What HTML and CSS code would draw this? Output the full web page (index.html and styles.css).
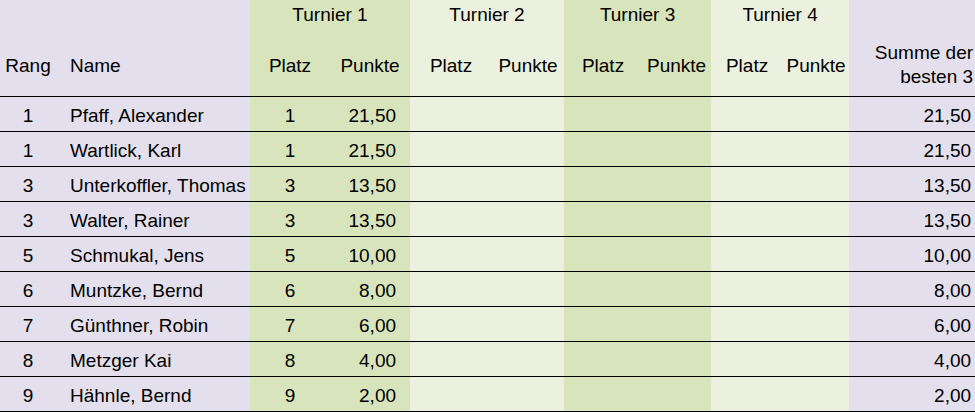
FILE: index.html
```html
<!DOCTYPE html>
<html lang="de">
<head>
<meta charset="utf-8">
<title>Rangliste</title>
<link rel="stylesheet" href="styles.css">
</head>
<body>
<table class="ranking">
  <colgroup>
    <col class="c-rang"><col class="c-name">
    <col class="c-t1p"><col class="c-t1k">
    <col class="c-t2p"><col class="c-t2k">
    <col class="c-t3p"><col class="c-t3k">
    <col class="c-t4p"><col class="c-t4k">
    <col class="c-sum">
  </colgroup>
  <thead>
    <tr class="row-tour">
      <th class="lav"></th><th class="lav"></th>
      <th colspan="2" class="g1">Turnier 1</th>
      <th colspan="2" class="g2">Turnier 2</th>
      <th colspan="2" class="g1">Turnier 3</th>
      <th colspan="2" class="g2">Turnier 4</th>
      <th class="lav"></th>
    </tr>
    <tr class="row-sub">
      <th class="lav center">Rang</th>
      <th class="lav left">Name</th>
      <th class="g1 center">Platz</th><th class="g1 center">Punkte</th>
      <th class="g2 center">Platz</th><th class="g2 center">Punkte</th>
      <th class="g1 center">Platz</th><th class="g1 center">Punkte</th>
      <th class="g2 center">Platz</th><th class="g2 center">Punkte</th>
      <th class="lav right sumhead">Summe der<br>besten 3</th>
    </tr>
  </thead>
  <tbody>
    <tr><td class="lav center">1</td><td class="lav left">Pfaff, Alexander</td><td class="g1 center">1</td><td class="g1 right">21,50</td><td class="g2"></td><td class="g2"></td><td class="g1"></td><td class="g1"></td><td class="g2"></td><td class="g2"></td><td class="lav right sum">21,50</td></tr>
    <tr><td class="lav center">1</td><td class="lav left">Wartlick, Karl</td><td class="g1 center">1</td><td class="g1 right">21,50</td><td class="g2"></td><td class="g2"></td><td class="g1"></td><td class="g1"></td><td class="g2"></td><td class="g2"></td><td class="lav right sum">21,50</td></tr>
    <tr><td class="lav center">3</td><td class="lav left">Unterkoffler, Thomas</td><td class="g1 center">3</td><td class="g1 right">13,50</td><td class="g2"></td><td class="g2"></td><td class="g1"></td><td class="g1"></td><td class="g2"></td><td class="g2"></td><td class="lav right sum">13,50</td></tr>
    <tr><td class="lav center">3</td><td class="lav left">Walter, Rainer</td><td class="g1 center">3</td><td class="g1 right">13,50</td><td class="g2"></td><td class="g2"></td><td class="g1"></td><td class="g1"></td><td class="g2"></td><td class="g2"></td><td class="lav right sum">13,50</td></tr>
    <tr><td class="lav center">5</td><td class="lav left">Schmukal, Jens</td><td class="g1 center">5</td><td class="g1 right">10,00</td><td class="g2"></td><td class="g2"></td><td class="g1"></td><td class="g1"></td><td class="g2"></td><td class="g2"></td><td class="lav right sum">10,00</td></tr>
    <tr><td class="lav center">6</td><td class="lav left">Muntzke, Bernd</td><td class="g1 center">6</td><td class="g1 right">8,00</td><td class="g2"></td><td class="g2"></td><td class="g1"></td><td class="g1"></td><td class="g2"></td><td class="g2"></td><td class="lav right sum">8,00</td></tr>
    <tr><td class="lav center">7</td><td class="lav left">Günthner, Robin</td><td class="g1 center">7</td><td class="g1 right">6,00</td><td class="g2"></td><td class="g2"></td><td class="g1"></td><td class="g1"></td><td class="g2"></td><td class="g2"></td><td class="lav right sum">6,00</td></tr>
    <tr><td class="lav center">8</td><td class="lav left">Metzger Kai</td><td class="g1 center">8</td><td class="g1 right">4,00</td><td class="g2"></td><td class="g2"></td><td class="g1"></td><td class="g1"></td><td class="g2"></td><td class="g2"></td><td class="lav right sum">4,00</td></tr>
    <tr class="last"><td class="lav center">9</td><td class="lav left">Hähnle, Bernd</td><td class="g1 center">9</td><td class="g1 right">2,00</td><td class="g2"></td><td class="g2"></td><td class="g1"></td><td class="g1"></td><td class="g2"></td><td class="g2"></td><td class="lav right sum">2,00</td></tr>
  </tbody>
</table>
</body>
</html>
```
FILE: styles.css
```css
html, body {
  margin: 0;
  padding: 0;
  background: #ffffff;
}
.ranking {
  width: 975px;
  table-layout: fixed;
  border-collapse: separate;
  border-spacing: 0;
  font-family: "Liberation Sans", Arial, sans-serif;
  font-size: 19px;
  color: #000;
}
.c-rang { width: 56px; }
.c-name { width: 194px; }
.c-t1p { width: 80px; }
.c-t1k { width: 80px; }
.c-t2p { width: 82px; }
.c-t2k { width: 72px; }
.c-t3p { width: 78px; }
.c-t3k { width: 69px; }
.c-t4p { width: 72px; }
.c-t4k { width: 66px; }
.c-sum { width: 126px; }

th, td {
  padding: 0;
  font-weight: normal;
  white-space: nowrap;
}
.lav { background: #e4dfec; }
.g1 { background: #d8e4bc; }
.g2 { background: #ebf1de; }

.row-tour { height: 34px; }
.row-tour th {
  vertical-align: top;
  padding-top: 5px;
  text-align: center;
  line-height: 20px;
}
.row-sub { height: 62px; }
.row-sub th {
  vertical-align: middle;
  line-height: 20px;
  padding-top: 2px;
}
.center { text-align: center; }
.left { text-align: left; padding-left: 14px; }
.right { text-align: right; padding-right: 14px; }
.row-sub th.sumhead { padding-right: 2px; line-height: 24px; padding-top: 0; }

tbody tr { height: 35px; }
tbody td {
  border-top: 1px solid #000;
  vertical-align: middle;
  line-height: 20px;
  padding-top: 3px;
}
tbody tr.last { height: 36px; }
tbody tr.last td {
  border-bottom: 1px solid #000;
}
td.sum { padding-right: 4px; }
```
